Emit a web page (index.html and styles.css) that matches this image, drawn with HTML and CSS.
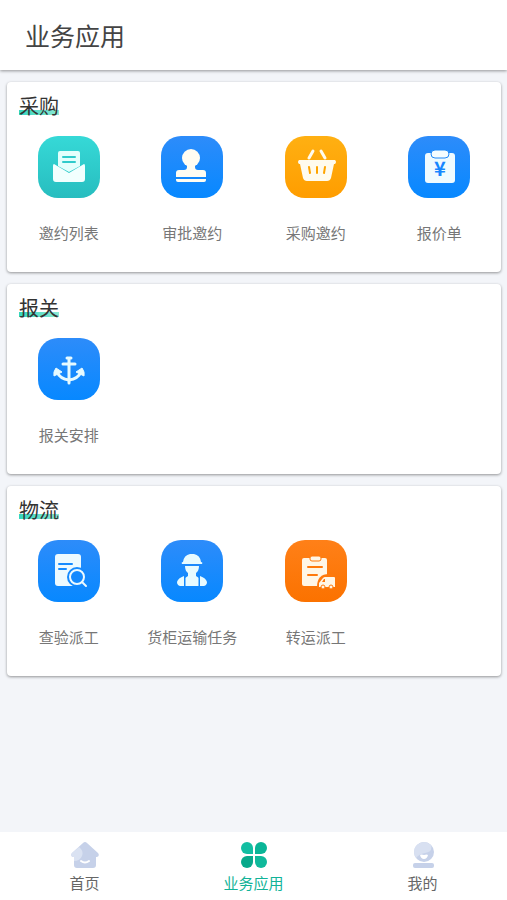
FILE: index.html
```html
<!DOCTYPE html>
<html lang="zh-CN">
<head>
    <meta charset="UTF-8">
    <meta name="viewport" content="width=device-width, initial-scale=1.0">
    <title>业务应用</title>
    <link rel="stylesheet" href="styles.css">
</head>
<body>
    <header class="header">
        <h1>业务应用</h1>
    </header>

    <main class="content">
        <section class="card">
            <h2><span class="mark">采购</span></h2>
            <div class="app-grid">
                <a class="app" href="#">
                    <svg class="app-icon teal" viewBox="0 0 62 62" aria-hidden="true">
                        <path fill="#e3fffc" d="M22 15h18q2 0 2 2v13l-11 6-11-6V17q0-2 2-2z"/>
                        <path fill="none" stroke="#2fcbcb" stroke-width="2" stroke-linecap="round" d="M25 21h12M25 26h12"/>
                        <path fill="#f2fffe" d="M16 28l15 9 15-9q1 0 1 2v13q0 3-3 3H18q-3 0-3-3V30q0-2 1-2z"/>
                    </svg>
                    <span class="app-label">邀约列表</span>
                </a>
                <a class="app" href="#">
                    <svg class="app-icon blue" viewBox="0 0 62 62" aria-hidden="true">
                        <g fill="#fffdf2">
                            <circle cx="30" cy="22" r="9"/>
                            <path d="M26 28h8v3q0 3 3 3h5q3 0 3 3v4H15v-4q0-3 3-3h5q3 0 3-3z"/>
                            <path d="M15 43h30v1q0 2-2 2H17q-2 0-2-2z"/>
                        </g>
                    </svg>
                    <span class="app-label">审批邀约</span>
                </a>
                <a class="app" href="#">
                    <svg class="app-icon amber" viewBox="0 0 62 62" aria-hidden="true">
                        <path fill="none" stroke="#fffbee" stroke-width="3" stroke-linecap="round" d="M28 15l-4 7M36 15l4 7"/>
                        <path fill="#fffbee" d="M14 24h36q2 2 0 4h-1l-3 14q-1 3-4 3H22q-3 0-4-3l-3-14h-1q-2-2 0-4z"/>
                        <path fill="none" stroke="#ffa400" stroke-width="2" stroke-linecap="round" d="M24 31l1 6M32 31v6M40 31l-1 6"/>
                    </svg>
                    <span class="app-label">采购邀约</span>
                </a>
                <a class="app" href="#">
                    <svg class="app-icon blue" viewBox="0 0 62 62" aria-hidden="true">
                        <rect x="17" y="17" width="30" height="30" rx="3" fill="#effbff"/>
                        <rect x="23" y="14" width="18" height="8" rx="4" fill="#f5fdff" stroke="#2189f8" stroke-width="1"/>
                        <text class="yen" x="32" y="40" text-anchor="middle">¥</text>
                    </svg>
                    <span class="app-label">报价单</span>
                </a>
            </div>
        </section>

        <section class="card">
            <h2><span class="mark">报关</span></h2>
            <div class="app-grid">
                <a class="app" href="#">
                    <svg class="app-icon blue" viewBox="0 0 62 62" aria-hidden="true">
                        <g fill="none" stroke="#e6faff" stroke-linecap="round">
                            <path stroke-width="3" d="M31 21v24M25 26h12M29 20h4"/>
                            <path stroke-width="3" d="M19 34q3 7 12 8 9-1 12-8"/>
                        </g>
                        <g fill="#e6faff" stroke="#e6faff" stroke-linejoin="round">
                            <path d="M18 30l6 4-4 2-4 2q-1-4 2-8zM44 30l-6 4 4 2 4 2q1-4-2-8z"/>
                        </g>
                    </svg>
                    <span class="app-label">报关安排</span>
                </a>
            </div>
        </section>

        <section class="card">
            <h2><span class="mark">物流</span></h2>
            <div class="app-grid">
                <a class="app" href="#">
                    <svg class="app-icon blue" viewBox="0 0 62 62" aria-hidden="true">
                        <rect x="17" y="14" width="26" height="32" rx="3" fill="#edfaff"/>
                        <path fill="none" stroke="#168bff" stroke-width="2" stroke-linecap="round" d="M21 24h13M21 29h7"/>
                        <circle cx="39" cy="37" r="10" fill="#148aff"/>
                        <circle cx="39" cy="37" r="7" fill="none" stroke="#edfaff" stroke-width="2"/>
                        <path fill="none" stroke="#edfaff" stroke-width="2" stroke-linecap="round" d="M44 42l4 4"/>
                    </svg>
                    <span class="app-label">查验派工</span>
                </a>
                <a class="app" href="#">
                    <svg class="app-icon blue" viewBox="0 0 62 62" aria-hidden="true">
                        <g fill="#e8fbff">
                            <path d="M22 22q1-7 7-8h4q6 1 7 8 2 0 1 2H21q-1-2 1-2z"/>
                            <path d="M24 26h14q0 5-3 7v3l3 2v8H24v-8l3-2v-3q-3-2-3-7z"/>
                            <path d="M23 36v10h-4q-3-1-3-4 1-4 7-6zM39 36v10h4q3-1 3-4-1-4-7-6z"/>
                        </g>
                        <path fill="none" stroke="#1489ff" stroke-width="1" d="M24 35v11M38 35v11"/>
                    </svg>
                    <span class="app-label">货柜运输任务</span>
                </a>
                <a class="app" href="#">
                    <svg class="app-icon orange" viewBox="0 0 62 62" aria-hidden="true">
                        <rect x="17" y="18" width="25" height="28" rx="2" fill="#fff6e6"/>
                        <rect x="25" y="16" width="11" height="5" rx="2" fill="#fff6e6" stroke="#ff790b"/>
                        <path fill="none" stroke="#ff790b" stroke-width="2" stroke-linecap="round" d="M23 27h14M23 35h9"/>
                        <path fill="#ff790b" d="M32 47q0-13 12-13h4v14H32z"/>
                        <path fill="#fff6e6" d="M40 37h9q1 0 1 1v9H34v-4l4-5q1-1 2-1z"/>
                        <path fill="#ff790b" d="M37 42l2-3h1v3z"/>
                        <g fill="#fff6e6" stroke="#ff790b">
                            <circle cx="38" cy="47" r="2"/>
                            <circle cx="46" cy="47" r="2"/>
                        </g>
                    </svg>
                    <span class="app-label">转运派工</span>
                </a>
            </div>
        </section>
    </main>

    <nav class="tabbar">
        <a class="tab" href="#">
            <svg class="tab-icon" viewBox="0 0 28 28" aria-hidden="true">
                <path fill="#c6d1e9" d="M12 2q2-2 4 0l11 10q2 3-1 4h-1v8q0 3-3 3H6q-3 0-3-3v-8H2q-3-1-1-4z"/>
                <path fill="#dae2f2" d="M1 12l7-6q5 4 3 9-2 5-8 5v-4H2q-3-1-1-4z"/>
                <path fill="none" stroke="#fff" stroke-width="2" stroke-linecap="round" d="M10 20q4 3 8 0"/>
            </svg>
            <span>首页</span>
        </a>
        <a class="tab active" href="#">
            <svg class="tab-icon" viewBox="0 0 28 28" aria-hidden="true">
                <path fill="#12bea2" d="M13 13H7a6 6 0 1 1 6-6z"/>
                <path fill="#0ab597" d="M15 13V7a6 6 0 1 1 6 6z"/>
                <path fill="#08a98b" d="M13 15v6a6 6 0 1 1-6-6z"/>
                <path fill="#0fb99b" d="M15 15h6a6 6 0 1 1-6 6z"/>
            </svg>
            <span>业务应用</span>
        </a>
        <a class="tab" href="#">
            <svg class="tab-icon" viewBox="0 0 28 28" aria-hidden="true">
                <circle cx="15" cy="11" r="10" fill="#c6d1e9"/>
                <path fill="#d8e0f1" d="M5 11A10 10 0 0 1 22 4q2 7-6 8-6 1-9 5-2-3-2-6z"/>
                <path fill="#fff" d="M11 14q1-1 4 0 3-1 4 0-1 4-4 4t-4-4z"/>
                <rect x="4" y="22" width="21" height="5" rx="2" fill="#c6d1e9"/>
            </svg>
            <span>我的</span>
        </a>
    </nav>
</body>
</html>
```
FILE: styles.css
```css
* {
    box-sizing: border-box;
}

body {
    display: flex;
    flex-direction: column;
    min-height: 100vh;
    margin: 0;
    font-family: "Noto Sans CJK SC", sans-serif;
    background: #f3f5f9;
    color: #444;
}

a {
    color: inherit;
    text-decoration: none;
}

.header {
    padding: 15px 25px;
    background: #fff;
    box-shadow: 0 1px 3px rgba(0,0,0,0.4);
}

.header h1 {
    margin: 0;
    font-size: 25px;
    font-weight: 400;
    line-height: 40px;
}

.content {
    display: flex;
    flex: 1;
    flex-direction: column;
    gap: 12px;
    padding: 12px 6px 12px 7px;
}

.card {
    padding: 9px 0 27px;
    border-radius: 4px;
    background: #fff;
    box-shadow: 0 1px 3px rgba(0,0,0,0.4);
}

.card h2 {
    margin: 0 0 15px;
    padding: 0 12px;
    font-size: 20px;
    font-weight: 400;
    line-height: 30px;
    color: #333;
}

/* green marker under the section title */
.mark {
    background: linear-gradient(90deg, #35d5be, #8ce9d4) 0 19px / 100% 5px no-repeat;
}

.app-grid {
    display: grid;
    grid-template-columns: repeat(4, 1fr);
}

.app {
    display: flex;
    flex-direction: column;
    align-items: center;
    gap: 23px;
}

.app-icon {
    width: 62px;
    height: 62px;
    border-radius: 20px;
}

.teal { background: linear-gradient(#36d9d7, #27bdbf); }
.blue { background: linear-gradient(#2d8cfa, #0788ff); }
.amber { background: linear-gradient(#ffb012, #ff9d00); }
.orange { background: linear-gradient(#ff8018, #fb7200); }

.yen {
    font-family: "Noto Sans CJK SC", sans-serif;
    font-size: 20px;
    font-weight: bold;
    fill: #1687ff;
}

.app-label {
    font-size: 15px;
    line-height: 24px;
    color: #777;
}

.tabbar {
    display: flex;
    height: 68px;
    background: #fff;
}

.tab {
    display: flex;
    flex: 1;
    flex-direction: column;
    align-items: center;
    padding-top: 9px;
    font-size: 15px;
    line-height: 20px;
    color: #666;
}

.tab-icon {
    width: 28px;
    height: 28px;
    margin-bottom: 4px;
}

.tab.active {
    color: #12b398;
}
```
